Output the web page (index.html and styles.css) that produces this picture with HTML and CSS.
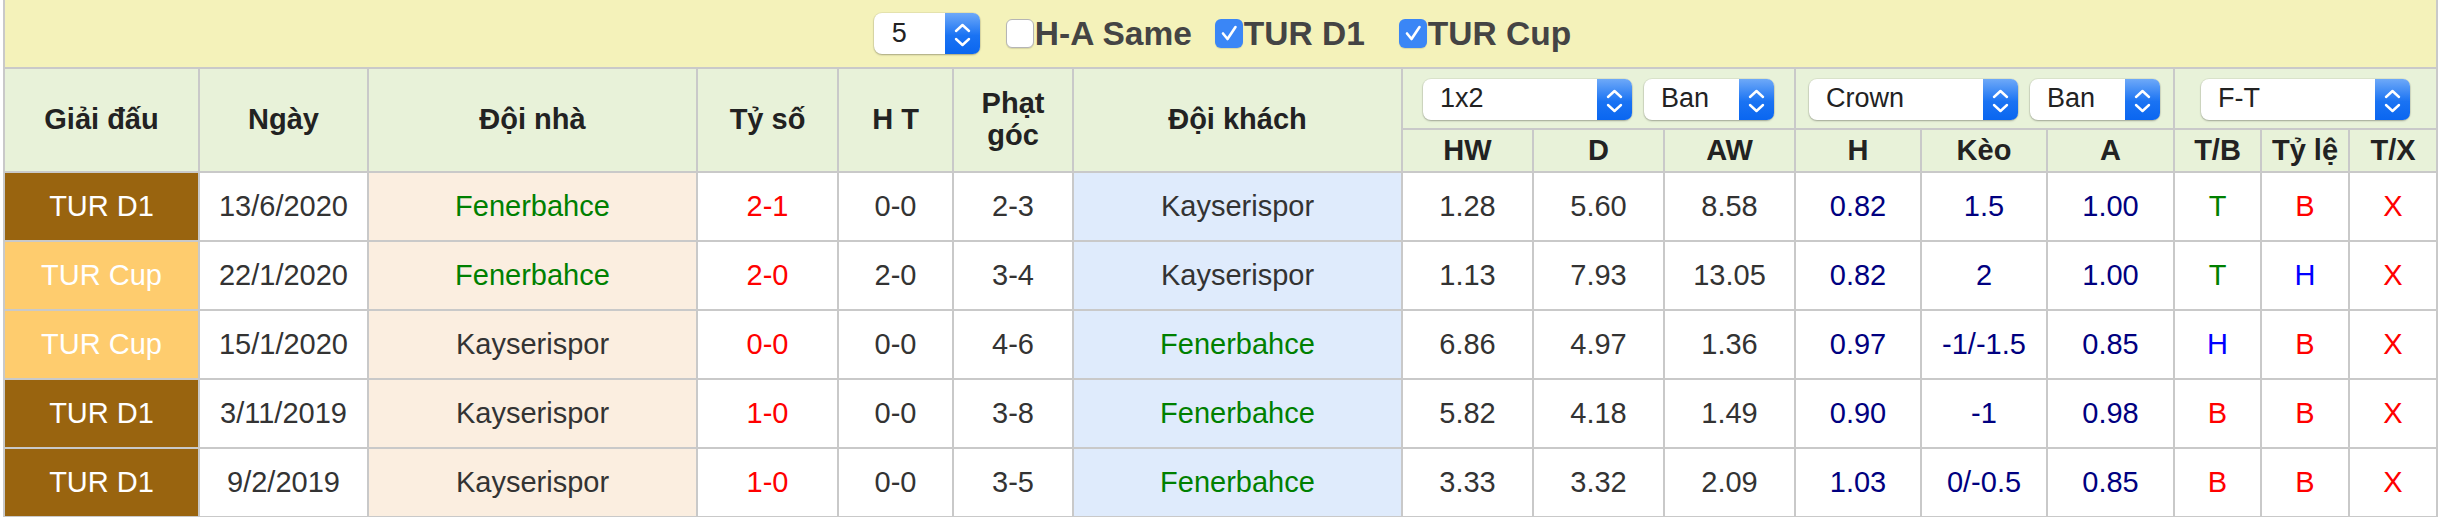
FILE: index.html
```html
<!DOCTYPE html>
<html lang="vi">
<head>
<meta charset="utf-8">
<title>Đối đầu</title>
<link rel="stylesheet" href="styles.css">
</head>
<body>
<div class="board">
  <div class="toolbar">
    <div class="sel sel-num"><span class="sel-text">5</span><span class="step"><svg viewBox="0 0 35 41" width="35" height="41"><path d="M11 29 L17.5 35 L24 29 M11 21 L17.5 15 L24 21" transform="translate(0,-3)" fill="none" stroke="#fff" stroke-width="2.4" stroke-linecap="round" stroke-linejoin="round"/></svg></span></div>
    <span class="cb"></span><span class="cb-label lbl-ha">H-A Same</span>
    <span class="cb on"><svg viewBox="0 0 28 28" width="28" height="28"><path d="M8 14.5 L12.5 20 L20.5 8" fill="none" stroke="#fff" stroke-width="2.6" stroke-linecap="round" stroke-linejoin="round"/></svg></span><span class="cb-label lbl-d1">TUR D1</span>
    <span class="cb on"><svg viewBox="0 0 28 28" width="28" height="28"><path d="M8 14.5 L12.5 20 L20.5 8" fill="none" stroke="#fff" stroke-width="2.6" stroke-linecap="round" stroke-linejoin="round"/></svg></span><span class="cb-label">TUR Cup</span>
  </div>

  <div class="th tall">Giải đấu</div>
  <div class="th tall">Ngày</div>
  <div class="th tall">Đội nhà</div>
  <div class="th tall">Tỷ số</div>
  <div class="th tall">H T</div>
  <div class="th tall">Phạt góc</div>
  <div class="th tall">Đội khách</div>
  <div class="th grp">
    <div class="sel sel-wide"><span class="sel-text">1x2</span><span class="step"><svg viewBox="0 0 35 41" width="35" height="41"><path d="M11 29 L17.5 35 L24 29 M11 21 L17.5 15 L24 21" transform="translate(0,-3)" fill="none" stroke="#fff" stroke-width="2.4" stroke-linecap="round" stroke-linejoin="round"/></svg></span></div>
    <div class="sel sel-small"><span class="sel-text">Ban</span><span class="step"><svg viewBox="0 0 35 41" width="35" height="41"><path d="M11 29 L17.5 35 L24 29 M11 21 L17.5 15 L24 21" transform="translate(0,-3)" fill="none" stroke="#fff" stroke-width="2.4" stroke-linecap="round" stroke-linejoin="round"/></svg></span></div>
  </div>
  <div class="th grp">
    <div class="sel sel-wide"><span class="sel-text">Crown</span><span class="step"><svg viewBox="0 0 35 41" width="35" height="41"><path d="M11 29 L17.5 35 L24 29 M11 21 L17.5 15 L24 21" transform="translate(0,-3)" fill="none" stroke="#fff" stroke-width="2.4" stroke-linecap="round" stroke-linejoin="round"/></svg></span></div>
    <div class="sel sel-small"><span class="sel-text">Ban</span><span class="step"><svg viewBox="0 0 35 41" width="35" height="41"><path d="M11 29 L17.5 35 L24 29 M11 21 L17.5 15 L24 21" transform="translate(0,-3)" fill="none" stroke="#fff" stroke-width="2.4" stroke-linecap="round" stroke-linejoin="round"/></svg></span></div>
  </div>
  <div class="th grp">
    <div class="sel sel-wide"><span class="sel-text">F-T</span><span class="step"><svg viewBox="0 0 35 41" width="35" height="41"><path d="M11 29 L17.5 35 L24 29 M11 21 L17.5 15 L24 21" transform="translate(0,-3)" fill="none" stroke="#fff" stroke-width="2.4" stroke-linecap="round" stroke-linejoin="round"/></svg></span></div>
  </div>
  <div class="th">HW</div>
  <div class="th">D</div>
  <div class="th">AW</div>
  <div class="th">H</div>
  <div class="th">Kèo</div>
  <div class="th">A</div>
  <div class="th">T/B</div>
  <div class="th">Tỷ lệ</div>
  <div class="th">T/X</div>

  <div class="row">
    <div class="td lg-d1">TUR D1</div><div class="td">13/6/2020</div><div class="td home win">Fenerbahce</div><div class="td red">2-1</div><div class="td">0-0</div><div class="td">2-3</div><div class="td away">Kayserispor</div>
    <div class="td">1.28</div><div class="td">5.60</div><div class="td">8.58</div><div class="td navy">0.82</div><div class="td navy">1.5</div><div class="td navy">1.00</div><div class="td green">T</div><div class="td red">B</div><div class="td red">X</div>
  </div>
  <div class="row">
    <div class="td lg-cup">TUR Cup</div><div class="td">22/1/2020</div><div class="td home win">Fenerbahce</div><div class="td red">2-0</div><div class="td">2-0</div><div class="td">3-4</div><div class="td away">Kayserispor</div>
    <div class="td">1.13</div><div class="td">7.93</div><div class="td">13.05</div><div class="td navy">0.82</div><div class="td navy">2</div><div class="td navy">1.00</div><div class="td green">T</div><div class="td blue">H</div><div class="td red">X</div>
  </div>
  <div class="row">
    <div class="td lg-cup">TUR Cup</div><div class="td">15/1/2020</div><div class="td home">Kayserispor</div><div class="td red">0-0</div><div class="td">0-0</div><div class="td">4-6</div><div class="td away win">Fenerbahce</div>
    <div class="td">6.86</div><div class="td">4.97</div><div class="td">1.36</div><div class="td navy">0.97</div><div class="td navy">-1/-1.5</div><div class="td navy">0.85</div><div class="td blue">H</div><div class="td red">B</div><div class="td red">X</div>
  </div>
  <div class="row">
    <div class="td lg-d1">TUR D1</div><div class="td">3/11/2019</div><div class="td home">Kayserispor</div><div class="td red">1-0</div><div class="td">0-0</div><div class="td">3-8</div><div class="td away win">Fenerbahce</div>
    <div class="td">5.82</div><div class="td">4.18</div><div class="td">1.49</div><div class="td navy">0.90</div><div class="td navy">-1</div><div class="td navy">0.98</div><div class="td red">B</div><div class="td red">B</div><div class="td red">X</div>
  </div>
  <div class="row">
    <div class="td lg-d1">TUR D1</div><div class="td">9/2/2019</div><div class="td home">Kayserispor</div><div class="td red">1-0</div><div class="td">0-0</div><div class="td">3-5</div><div class="td away win">Fenerbahce</div>
    <div class="td">3.33</div><div class="td">3.32</div><div class="td">2.09</div><div class="td navy">1.03</div><div class="td navy">0/-0.5</div><div class="td navy">0.85</div><div class="td red">B</div><div class="td red">B</div><div class="td red">X</div>
  </div>
</div>
</body>
</html>
```
FILE: styles.css
```css
html, body {
  margin: 0;
  padding: 0;
  background: #fff;
}
body {
  padding-left: 3px;
  font-family: "Liberation Sans", Arial, sans-serif;
}
.board {
  display: grid;
  grid-template-columns: 193px 167px 327px 139px 113px 118px 327px 129px 129px 129px 124px 124px 125px 85px 86px 86px;
  grid-template-rows: 67px 59px 41px repeat(5, 67px);
  gap: 2px;
  padding: 0 2px 2px;
  background: #c9c9c9;
  width: max-content;
}
.toolbar {
  grid-column: 1 / -1;
  background: #f4f2ba;
  display: flex;
  align-items: center;
  justify-content: center;
  font-size: 33.5px;
  font-weight: bold;
  color: #444;
  padding-left: 4px;
}
.sel {
  display: flex;
  align-items: stretch;
  height: 41px;
  background: #fff;
  border-radius: 8px;
  box-shadow: 0 1px 2px rgba(0, 0, 0, 0.28), 0 0 0 1px rgba(0, 0, 0, 0.05);
  font-size: 27px;
  font-weight: normal;
  color: #222;
  box-sizing: border-box;
}
.sel-text {
  flex: 1;
  display: flex;
  align-items: center;
  padding-left: 17px;
}
.step {
  width: 35px;
  flex: none;
  border-radius: 0 7px 7px 0;
  background: linear-gradient(#6ea9f8, #1a73f3 55%, #0a66f0);
  display: flex;
}
.sel-num { width: 106px; margin-right: 26px; }
.sel-num .sel-text { padding-left: 18px; }
.sel-wide { width: 209px; }
.sel-small { width: 130px; }
.cb {
  width: 28px;
  height: 29px;
  box-sizing: border-box;
  border-radius: 6px;
  background: #fff;
  border: 1px solid #b5b5b5;
  box-shadow: 0 1px 1px rgba(0, 0, 0, 0.12);
  flex: none;
  display: flex;
  margin-right: 1px;
}
.cb.on {
  border: none;
  background: #3a86f6;
}
.cb-label {
  white-space: nowrap;
}
.lbl-ha { margin-right: 23px; }
.lbl-d1 { margin-right: 34px; }
.th {
  background: #e8f2d9;
  font-weight: bold;
  font-size: 29px;
  color: #222;
  display: flex;
  align-items: center;
  justify-content: center;
  text-align: center;
  line-height: 1.1;
}
.th.tall { grid-row: span 2; }
.th.grp {
  grid-column: span 3;
  gap: 12px;
  padding-top: 1px;
}
.th.grp + .th.grp + .th.grp {
  grid-column: span 3;
}
.row { display: contents; }
.td {
  background: #fff;
  display: flex;
  align-items: center;
  justify-content: center;
  font-size: 29px;
  color: #333;
  white-space: nowrap;
}
.home { background: #fbeee0; }
.away { background: #dfebfc; }
.win { color: #008000; }
.red { color: #ff0000; }
.navy { color: #000080; }
.green { color: #008000; }
.blue { color: #0000ff; }
.lg-d1 { background: #99640f; color: #fff; }
.lg-cup { background: #fecc6e; color: #fff; }
```
